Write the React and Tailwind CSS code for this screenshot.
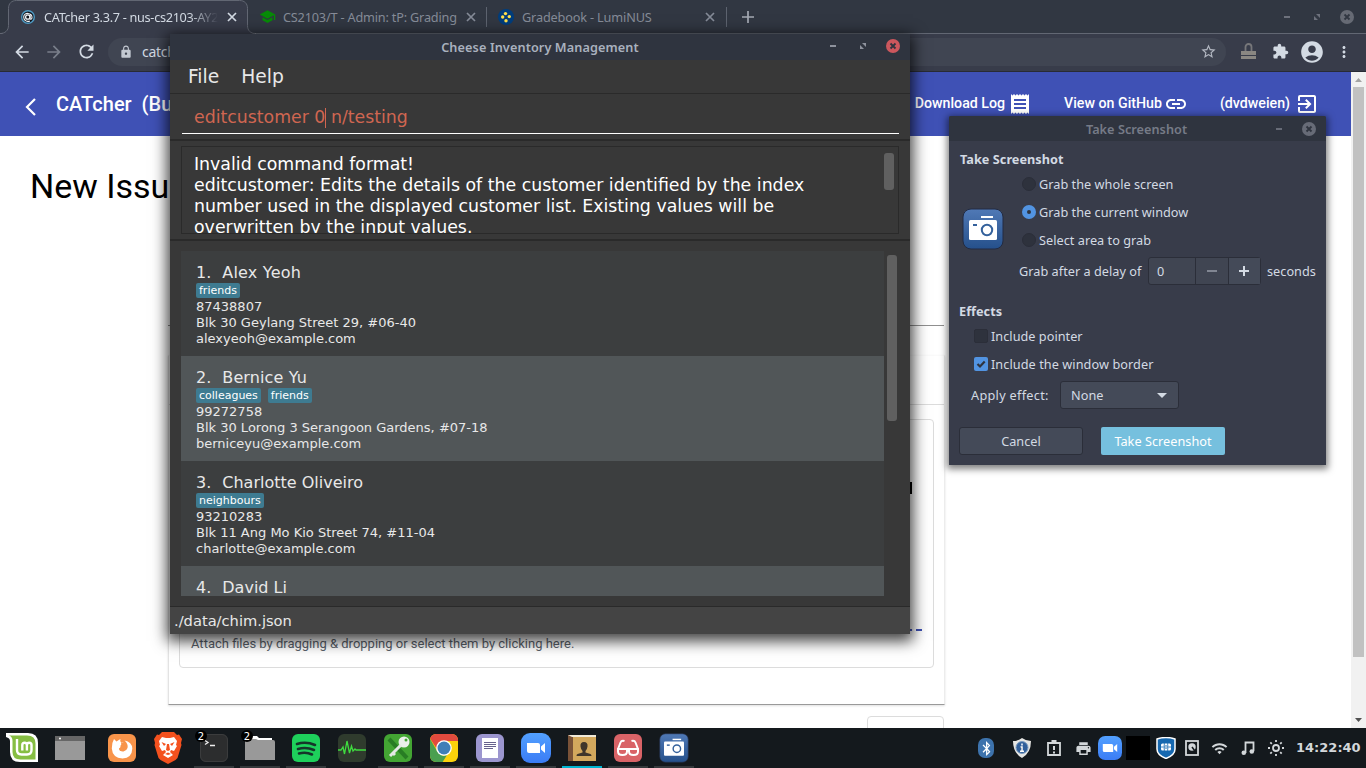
import React from "react";
import {
  MdArrowBack, MdArrowForward, MdRefresh, MdLock, MdStarBorder, MdExtension, MdAccountCircle,
  MdMoreVert, MdReceipt, MdLink, MdExitToApp, MdSchool, MdPrint, MdWifi,
} from "react-icons/md";
import { FaBluetoothB } from "react-icons/fa";

const ui = "font-['Noto_Sans',sans-serif]";

function Cross({ className = "" }) {
  return (
    <svg width="10" height="10" viewBox="0 0 10 10" className={className} stroke="currentColor" strokeWidth="1.7" fill="none">
      <path d="M1 1l8 8M9 1l-8 8" />
    </svg>
  );
}

function CloseButton({ color, mark }) {
  return (
    <svg width="14" height="14" viewBox="0 0 14 14">
      <circle cx="7" cy="7" r="7" fill={color} />
      <path d="M4.500 4.500l5 5M9.500 4.500l-5 5" stroke={mark} strokeWidth="1.800" />
    </svg>
  );
}

function Maximize({ color }) {
  return (
    <svg width="6" height="6" viewBox="0 0 6 6" fill={color}>
      <path d="M2 0h4v4zM0 2v4h4z" />
    </svg>
  );
}

function TabStrip() {
  return (
    <div className={`relative flex h-[33px] shrink-0 items-center bg-[#313742] text-[12.7px] ${ui}`}>
      <svg className="absolute left-0 top-0" width="1366" height="34" viewBox="0 0 1366 34">
        <path d="M0 34v-.5c5 0 8.500-3 8.500-8V8.500c0-5 3-8 8-8H239.500c5 0 8 3 8 8V25.500c0 5 3 8 8 8V34z" fill="#383c4a" />
        <path d="M0 33.500c5 0 8.500-3 8.500-8V8.500c0-5 3-8 8-8H239.500c5 0 8 3 8 8V25.500c0 5 3 8 8 8H1366" fill="none" stroke="#626773" />
      </svg>
      <div className="relative flex h-full w-[248px] items-center pl-[21px] pr-[11px] text-[#d3dae3]">
        <svg width="14" height="14" viewBox="0 0 14 14" className="shrink-0">
          <circle cx="7" cy="7" r="7" fill="#4f9bc4" />
          <circle cx="7" cy="7" r="5.600" fill="#10141c" />
          <circle cx="6.800" cy="7" r="2.200" fill="none" stroke="#f1f4f8" strokeWidth="1.300" />
          <path d="M9 4.700v3.600c0 1.600 2 1 2-.8 0-5-8-5.700-8.300-.5 0 3.800 3.700 5.200 6.200 3.900" fill="none" stroke="#f1f4f8" strokeWidth="1.100" />
        </svg>
        <span className="ml-[9px] w-[176px] translate-y-px overflow-hidden whitespace-nowrap tracking-[-0.3px] [mask-image:linear-gradient(to_right,black_145px,transparent_174px)]">CATcher 3.3.7 - nus-cs2103-AY2</span>
        <Cross className="ml-auto shrink-0" />
      </div>
      <div className="relative flex h-full w-[239px] items-center pl-[11px] pr-[11px] text-[#858b97]">
        <MdSchool size={17} color="#078a07" className="shrink-0" />
        <span className="ml-[7px] translate-y-px whitespace-nowrap tracking-[-0.18px]">CS2103/T - Admin: tP: Grading</span>
        <Cross className="ml-auto shrink-0" />
      </div>
      <div className="relative flex h-full w-[239px] items-center pl-[11px] pr-[11px] text-[#858b97]">
        <span className="-ml-[12px] mr-[-1px] h-5 w-px bg-[#5d636f]" />
        <svg width="16" height="16" viewBox="0 0 16 16" className="ml-[12px] shrink-0">
          <circle cx="8" cy="8" r="8" fill="#003d7c" />
          <g fill="#ffe04a"><circle cx="7.500" cy="4.600" r="1.700" /><circle cx="4.700" cy="8" r="1.700" /><circle cx="11.300" cy="7.600" r="1.700" /><circle cx="8" cy="11.700" r="1.700" /></g>
        </svg>
        <span className="ml-[8px] translate-y-px whitespace-nowrap tracking-[-0.15px]">Gradebook - LumiNUS</span>
        <Cross className="ml-auto" />
      </div>
      <span className="relative h-5 w-px bg-[#5d636f]" />
      <svg className="relative ml-[15px]" width="12" height="12" viewBox="0 0 12 12"><path d="M6 0v12M0 6h12" stroke="#a4a9b3" strokeWidth="1.700" /></svg>
      <div className="relative ml-auto flex items-center pr-[12px]">
        <span className="h-[2px] w-[6px] bg-[#6d717c]" />
        <span className="ml-[24px] mr-[20px]"><Maximize color="#6d717c" /></span>
        <CloseButton color="#666a74" mark="#313742" />
      </div>
    </div>
  );
}

function Toolbar() {
  return (
    <div className={`mt-px flex h-[38px] shrink-0 items-center border-b border-[#282b34] bg-[#383c4a] pb-[2px] text-[#d3dae3] ${ui}`}>
      <MdArrowBack size={20} className="ml-[12px]" />
      <MdArrowForward size={20} className="ml-[12px] text-[#797e8a]" />
      <MdRefresh size={21} className="ml-[12px]" />
      <div className="ml-[11px] flex h-7 w-[1118px] items-center rounded-full bg-[#404552] pl-[11px] pr-[9px]">
        <MdLock size={14} className="text-[#c3c9d2]" />
        <span className="ml-[9px] whitespace-nowrap text-[14px] tracking-[-0.3px]">catch</span>
        <MdStarBorder size={17} className="ml-auto text-[#b3b8c2]" />
      </div>
      <svg className="ml-[15px]" width="15" height="17" viewBox="0 0 15 17"><path d="M4.500 9V4a3 3 0 0 1 6 0v5" fill="none" stroke="#77777a" strokeWidth="1.800" /><path d="M0 8h15v4H0zM0 13h15v3H0z" fill="#8a8782" /></svg>
      <MdExtension size={17} className="ml-[16px]" />
      <MdAccountCircle size={26} className="ml-[10px]" />
      <MdMoreVert size={18} className="ml-[10px]" />
    </div>
  );
}

function PageContent() {
  return (
    <div className="flex min-h-0 flex-1 bg-white font-['Roboto',sans-serif]">
      <div className="flex w-[1351px] flex-col overflow-hidden">
        <header className="flex h-16 shrink-0 items-center bg-[#3f51b5] font-medium text-white">
          <svg className="ml-[24px] mt-[5px]" width="14" height="20" viewBox="0 0 14 20"><path d="M11 2L3 10l8 8" fill="none" stroke="#fff" strokeWidth="2.200" /></svg>
          <span className="ml-[18px] whitespace-pre text-[20px]">CATcher  (Bu</span>
          <div className="ml-auto flex items-center text-[14.200px]">
            <span>Download Log</span>
            <MdReceipt size={24} className="ml-[3px] mr-[32px]" />
            <span>View on GitHub</span>
            <MdLink size={24} className="ml-[2px] mr-[32px]" />
            <span>(dvdweien)</span>
            <MdExitToApp size={24} className="ml-[5px] mr-[32px]" />
          </div>
        </header>
        <h1 className="mt-[27px] h-[46px] pl-[30px] text-[34px] leading-[46px] text-black">New Issue</h1>
        <div className="ml-[168px] mt-[116px] h-px w-[776px] shrink-0 bg-[#8f8f8f]" />
        <section className="ml-[168px] mt-[29px] flex h-[350px] w-[777px] shrink-0 flex-col border border-b-[#9a9a9a] border-l-[#e3e3e3] border-r-[#ececec] border-t-[#fafafa] shadow-[0_1px_2px_rgba(0,0,0,0.12)]">
          <div className="h-[49px] shrink-0 border-b border-[#dcdcdc]" />
          <div className="ml-[10px] mt-[14px] flex h-[249px] w-[755px] flex-col rounded border border-[#dcdcdc]">
            <div className="ml-auto mr-[21px] mt-[62px] h-[12px] w-[10px] border-2 border-black" />
            <div className="mx-[11px] mt-[135px] h-0 border-t-2 border-dashed border-[#3f51b5]" />
            <p className="ml-[11px] mt-[4px] text-[13px] leading-[18px] text-[#586069]">Attach files by dragging &amp; dropping or select them by clicking here.</p>
          </div>
        </section>
        <div className="ml-[867px] mt-[11px] h-[40px] w-[77px] shrink-0 rounded border border-[#dcdcdc]" />
      </div>
      <div className="flex w-[15px] flex-col items-center bg-[#f1f1f1]">
        <svg width="15" height="15" viewBox="0 0 15 15"><path d="M4 10l3.500-4 3.500 4z" fill="#a3a3a3" /></svg>
        <div className="h-[570px] w-[11px] bg-[#c1c1c1]" />
        <svg className="mt-auto" width="15" height="15" viewBox="0 0 15 15"><path d="M4 5l3.500 4L11 5z" fill="#505050" /></svg>
      </div>
    </div>
  );
}

const customers = [
  { name: "Alex Yeoh", spacing: "tracking-[0.2px]", tags: ["friends"], phone: "87438807", address: "Blk 30 Geylang Street 29, #06-40", email: "alexyeoh@example.com" },
  { name: "Bernice Yu", spacing: "tracking-[0.12px]", tags: ["colleagues", "friends"], phone: "99272758", address: "Blk 30 Lorong 3 Serangoon Gardens, #07-18", email: "berniceyu@example.com" },
  { name: "Charlotte Oliveiro", spacing: "tracking-normal", tags: ["neighbours"], phone: "93210283", address: "Blk 11 Ang Mo Kio Street 74, #11-04", email: "charlotte@example.com" },
  { name: "David Li", spacing: "tracking-normal", tags: [], phone: "", address: "", email: "" },
];

function InventoryWindow() {
  return (
    <div className="absolute left-[170px] top-[34px] flex h-[600px] w-[740px] flex-col bg-[#383838] font-['DejaVu_Sans',sans-serif] text-[#e8e8e8] shadow-[0_4px_14px_3px_rgba(0,0,0,0.75)]">
      <div className={`grid h-[26px] shrink-0 grid-cols-[1fr_auto_1fr] items-center bg-[#2f343f] text-[12.700px] font-semibold text-[#a9b1be] ${ui}`}>
        <span />
        <span className="translate-y-px tracking-[0.1px]">Cheese Inventory Management</span>
        <div className="flex -translate-y-px items-center justify-end pr-[10px]">
          <span className="h-[2px] w-[6px] bg-[#8e929d]" />
          <span className="ml-[24px] mr-[20px]"><Maximize color="#8e929d" /></span>
          <CloseButton color="#cc575d" mark="#2f343f" />
        </div>
      </div>
      <div className="flex h-[33px] shrink-0 items-center gap-[21px] pl-[18px] pt-px text-[18.670px]"><span>File</span><span className="translate-x-px">Help</span></div>
      <div className="flex h-[48px] shrink-0 flex-col border-b-2 border-t border-[#2a2a2a] px-[11px]">
        <div className="ml-px flex h-[40px] items-center border-b border-white pl-[12px] pt-[8px] text-[17.330px] text-[#d06651]">
          <span>editcustomer 0</span><span className="-mr-px h-5 w-px bg-[#d06651]" /><span className="whitespace-pre"> n/testing</span>
        </div>
      </div>
      <div className="h-[100px] shrink-0 border-b-2 border-[#2a2a2a] pl-[11px] pt-[5px]">
        <div className="flex h-[88px] w-[718px] overflow-hidden border border-[#2a2a2a] pl-[12px]">
          <div className="mt-[7px] h-[79px] w-[690px] overflow-hidden text-[17.350px] leading-[21px] text-white">
            Invalid command format!<br />editcustomer: Edits the details of the customer identified by the index<br />number used in the displayed customer list. Existing values will be<br />overwritten by the input values.
          </div>
          <div className="mt-[6px] h-[37px] w-[10px] rounded-[3px] bg-[#606060]" />
        </div>
      </div>
      <div className="flex h-[365px] shrink-0 pl-[11px] pt-[10px]">
        <div className="h-[345px] w-[703px] overflow-hidden">
          {customers.map((c, i) => (
            <div key={c.name} className={`h-[105px] pl-[15px] pt-[11px] ${i % 2 ? "bg-[#515658]" : "bg-[#3c3e3f]"}`}>
              <div className="flex h-[21px] gap-[11px] text-[16px] leading-[21px]"><span>{i + 1}.</span><span className={c.spacing}>{c.name}</span></div>
              <div className="flex h-[16px] gap-[7px]">
                {c.tags.map((t) => <span key={t} className="h-[15px] rounded-[2px] bg-[#3e7b91] px-[3px] text-[11px] leading-[15px] text-white">{t}</span>)}
              </div>
              <div className="text-[13px] leading-4"><div>{c.phone}</div><div>{c.address}</div><div>{c.email}</div></div>
            </div>
          ))}
        </div>
        <div className="ml-[3px] mt-[4px] h-[166px] w-[10px] rounded-[3px] bg-[#606060]" />
      </div>
      <div className="flex flex-1 items-center border-t border-[#2a2a2a] bg-[#444444] pl-[4px] text-[14.670px]">./data/chim.json</div>
    </div>
  );
}

function CameraIcon({ size }) {
  return (
    <svg width={size} height={size} viewBox="0 0 42 42">
      <defs><linearGradient id="cam" x2="0" y2="1"><stop stopColor="#5079b6" /><stop offset="1" stopColor="#25508b" /></linearGradient></defs>
      <rect x="1" y="1" width="40" height="40" rx="8" fill="url(#cam)" stroke="#222b42" />
      <path d="M19 8h12v2H19z" fill="#fff" />
      <rect x="7" y="12" width="28" height="20" rx="1.500" fill="#fff" />
      <path d="M11 16h4v2h-4z" fill="#34619c" />
      <circle cx="25" cy="22" r="5.200" fill="none" stroke="#34619c" strokeWidth="2" />
    </svg>
  );
}

function Radio({ label, checked }) {
  return (
    <div className="flex h-7 items-center gap-[3px]">
      <span className={`flex h-[14px] w-[14px] items-center justify-center rounded-full ${checked ? "bg-[#5294e2]" : "border border-[#2b2e39] bg-[#2e323d]"}`}>
        {checked && <span className="h-1 w-1 rounded-full bg-[#2f343f]" />}
      </span>
      <span className="translate-y-px">{label}</span>
    </div>
  );
}

function ScreenshotDialog() {
  return (
    <div className={`absolute left-[949px] top-[116px] flex h-[349px] w-[377px] flex-col rounded-t-[2px] bg-[#383c4a] text-[12.700px] tracking-[0.03px] text-[#d3dae3] shadow-[0_2px_7px_2px_rgba(0,0,0,0.5)] ${ui}`}>
      <div className="grid h-[25px] shrink-0 grid-cols-[1fr_auto_1fr] items-center rounded-t-[2px] bg-[#2f343f] font-semibold text-[#767b87]">
        <span />
        <span className="-translate-x-px translate-y-px">Take Screenshot</span>
        <div className="flex items-center justify-end gap-[20px] pr-[10px]"><span className="h-[2px] w-[6px] bg-[#676b77]" /><CloseButton color="#676b77" mark="#2f343f" /></div>
      </div>
      <div className="px-[10px] pt-[8px]">
        <div className="h-[21px] pl-px font-bold leading-[20px]">Take Screenshot</div>
        <div className="flex">
          <div className="ml-[3px] mt-[38px] w-[42px]"><CameraIcon size={42} /></div>
          <div className="ml-[18px]"><Radio label="Grab the whole screen" /><Radio label="Grab the current window" checked /><Radio label="Select area to grab" /></div>
        </div>
        <div className="ml-[60px] mt-[3px] flex h-7 items-center whitespace-nowrap">
          <span className="w-[129px] translate-y-px">Grab after a delay of</span>
          <div className="flex h-7 w-[113px] rounded-[3px] border border-[#2b2e39] bg-[#404552]">
            <span className="flex w-[47px] items-center border-r border-[#2b2e39] pl-[8px] pt-[2px]">0</span>
            <span className="flex w-[33px] items-center justify-center border-r border-[#2b2e39]"><span className="h-[2px] w-[10px] bg-[#818692]" /></span>
            <span className="flex flex-1 items-center justify-center bg-[#444a58] pr-px"><svg width="10" height="10"><path d="M5 0v10M0 5h10" stroke="#d3dae3" strokeWidth="2" /></svg></span>
          </div>
          <span className="ml-[6px] translate-y-px">seconds</span>
        </div>
        <div className="mt-[16px] h-[20px] font-bold leading-[20px]">Effects</div>
        <div className="ml-[15px] mt-px flex h-7 items-center gap-[3px]"><span className="h-[14px] w-[14px] rounded-[2px] border border-[#2b2e39] bg-[#2e323d]" /><span className="translate-y-px">Include pointer</span></div>
        <div className="ml-[15px] flex h-7 items-center gap-[3px]">
          <svg width="14" height="14"><rect width="14" height="14" rx="2" fill="#5294e2" /><path d="M3.500 7l2.500 2.500 4.700-5" stroke="#2f343f" strokeWidth="2.200" fill="none" /></svg>
          <span className="translate-y-px tracking-[0.07px]">Include the window border</span>
        </div>
        <div className="ml-[12px] mt-[3px] flex h-7 items-center">
          <span className="w-[89px] translate-y-px tracking-[0.3px]">Apply effect:</span>
          <span className="flex h-7 w-[119px] items-center justify-between rounded-[3px] border border-[#2b2e39] bg-[#444a58] pl-[10px] pr-[11px]"><span className="translate-y-px">None</span><svg width="10" height="5"><path d="M0 0h10L5 5z" fill="#d3dae3" /></svg></span>
        </div>
        <div className="mt-[18px] flex gap-[18px]">
          <span className="flex h-7 w-[124px] items-center justify-center rounded-[3px] border border-[#2b2e39] bg-[#444a58] pt-[2px]">Cancel</span>
          <span className="flex h-7 w-[124px] items-center justify-center rounded-[2px] bg-[#76c0de] pt-[2px] text-white">Take Screenshot</span>
        </div>
      </div>
    </div>
  );
}

function Tile({ fill, children }) {
  return (
    <svg width="30" height="30" viewBox="0 0 30 30">
      <rect x="1" y="1" width="28" height="28" rx="6" fill={fill} />
      {children}
    </svg>
  );
}

const Folder = ({ window: asWindow }) => (
  <svg width="30" height="30" viewBox="0 0 30 30">
    {asWindow
      ? <><path d="M0 3h30v24H0z" fill="#999" /><path d="M0 3h30v5H0z" fill="#666" /><circle cx="5" cy="5.500" r="1" fill="#fff" /></>
      : <><path d="M9 3h3l2 2h13v4H4V3z" fill="#fff" /><path d="M0 6h11l2 1h15q2 0 2 2v18H0z" fill="#999" /></>}
  </svg>
);

const Zoom = ({ size }) => (
  <svg width={size} height={size} viewBox="0 0 30 30">
    <defs><linearGradient id="zm" x2="0" y2="1"><stop stopColor="#52a0ff" /><stop offset="1" stopColor="#3b7cf5" /></linearGradient></defs>
    <rect width="30" height="30" rx="9" fill="url(#zm)" />
    <path d="M6 10h11q2 0 2 2v8H8q-2 0-2-2zM20 13.500l4-3.500v10l-4-3.500z" fill="#fff" />
  </svg>
);

const apps = [
  { w: "mint", icon: (
    <svg width="32" height="30" viewBox="0 0 32 30">
      <path d="M0 0h22q10 0 10 10v19H14Q4 29 4 19V8q0-3-4-4z" fill="#fff" />
      <path d="M3 2.500h18q8.500 0 8.500 8v16H14.500Q6.500 26.500 6.500 19V8Q6.500 3.500 3 2.500z" fill="#86be43" />
      <path d="M11 6v11q0 4.500 4.500 4.500h5.500q4.500 0 4.500-4.500v-5q0-2.300-2.300-2.300t-2.300 2.300v5.500M20.900 12q0-2.300-2.300-2.300t-2.300 2.300v5.500" fill="none" stroke="#fff" strokeWidth="2.400" />
    </svg>) },
  { w: "desktop", icon: <Folder window /> },
  { w: "firefox", icon: (
    <Tile fill="#f8944a">
      <path d="M7 6l2.500 2.500Q12 6.500 13.500 6q-.8 2 .5 3.500h2.500l-3 3q.5 2-1.500 3 1 3.500 4.500 3 3-.5 4-3.500 1-4-3-7.500Q25 9 25.300 15.500 25 25 15.500 25.500 5.500 25 4.800 15.500 4.800 9.500 7 6z" fill="#fff" />
      <path d="M14 9.500l4 .3-3.500 2.700zM12 15.500q2.500 1.800 5-.3-1 3.500-4 2.800z" fill="#f8944a" />
    </Tile>) },
  { w: "brave", icon: (
    <svg width="28" height="32" viewBox="0 0 28 32">
      <path d="M8 0h12l3 3 2-.5L28 7l-1 4 .5 2-4 13-2 2L14 32l-7.500-4-2-2-4-13L1 11 0 7l3-4.500L5 3z" fill="#f4511e" />
      <path d="M5 9l3-4 4 1h4l4-1 3 4-1 4 1 1-3 5-3-1-1 2 3 3-5 3-5-3 3-3-1-2-3 1-3-5 1-1z" fill="#fff" />
      <path d="M7.500 10l4.500 2-2 2zM20.500 10L16 12l2 2zM13 12h2l1 6-2 1-2-1zM11 22l3-1.500 3 1.500-3 1z" fill="#f4511e" />
    </svg>) },
  { w: "terminal", badge: true, run: true, icon: <Tile fill="#2c2d2e"><rect x="1.500" y="1.500" width="27" height="27" rx="5.500" fill="none" stroke="#3b3c3d" /><path d="M6 7.500l3 2-3 2M11 12.500h5" fill="none" stroke="#eee" strokeWidth="1.300" /></Tile> },
  { w: "files", badge: true, run: true, icon: <Folder /> },
  { w: "spotify", run: true, icon: <Tile fill="#1ed05b"><path d="M6 11q9-3 18 1M7 16q8-2.500 16 1M8 20.500q7-2 13 1" fill="none" stroke="#16352a" strokeWidth="2.600" strokeLinecap="round" /></Tile> },
  { w: "monitor", icon: <Tile fill="#2f3b2d"><path d="M1 17h3l2-3 1.500 7L10 8l2.500 12 2-7 1.500 5 2-2 1 1h10" fill="none" stroke="#3fdc3f" strokeWidth="1.300" /></Tile> },
  { w: "keepass", run: true, icon: <Tile fill="#43a533"><path d="M6 6l18 19" stroke="#287d24" strokeWidth="4" /><circle cx="21" cy="9" r="5.500" fill="#eaf0ea" /><circle cx="23" cy="7" r="1.500" fill="#43a533" /><path d="M18 12L7 23M10 20l2 2" stroke="#e5e9e5" strokeWidth="3" /></Tile> },
  { w: "chrome", run: true, icon: (
    <svg width="30" height="30" viewBox="0 0 30 30">
      <defs><clipPath id="ch"><rect x="1" y="1" width="28" height="28" rx="6" /></clipPath></defs>
      <g clipPath="url(#ch)"><path d="M0 0h30v30H0z" fill="#fcd20b" /><path d="M0 0h30v8H15l-7 8L0 4z" fill="#e14a3e" /><path d="M0 4l8 14 6 5 4-1-5 8H0z" fill="#4a9f4f" /></g>
      <circle cx="15" cy="15" r="7.800" fill="#fff" /><circle cx="15" cy="15" r="6.500" fill="#3f7fb8" />
    </svg>) },
  { w: "editor", run: true, icon: <Tile fill="#9c96cf"><path d="M7 5h16v20H7z" fill="#fff" /><path d="M9 9.500h12M9 11.500h12M9 13.500h12M9 15.500h9" stroke="#565080" strokeWidth=".9" /></Tile> },
  { w: "zoom", run: true, icon: <Zoom size={30} /> },
  { w: "contacts", run: true, active: true, icon: (
    <svg width="30" height="30" viewBox="0 0 30 30"><path d="M1 2h28v26H1z" fill="#d3a85d" /><path d="M1 2h5v26H1z" fill="#795238" /><path d="M1 2h28v2H5z" fill="#f1ead9" /><path d="M17 9q4 0 3.500 4.500Q20 17 18.500 18v1.500l5 1.500q1 .5 1 2h-15q0-1.500 1-2l5-1.500V18Q14 17 13.500 13.500 13 9 17 9z" fill="#40362b" /></svg>) },
  { w: "reader", run: true, icon: (
    <Tile fill="#d96367">
      <g fill="none" stroke="#fff" strokeWidth="2"><path d="M5 16h9v2.500q0 3.500-4.500 3.500T5 18.500zM16 16h9v2.500q0 3.500-4.500 3.500T16 18.500zM14 17h2M5 16l2.500-6.500q1-2.500 4-1.500M25 16l-2.500-6.500q-1-2.500-4-1.500" /></g>
    </Tile>) },
  { w: "camera", run: true, icon: <CameraIcon size={30} /> },
];

function Taskbar() {
  return (
    <div className="flex h-10 shrink-0 bg-[#14191d]">
      {apps.map((a, i) => (
        <div key={a.w} className={`relative flex h-10 w-[46px] flex-col items-center pt-[5px] ${i === 0 ? "pr-[2px]" : i === 1 ? "ml-px" : i === 2 ? "ml-[6px]" : ""}`}>
          <div className="flex h-[30px] items-center">{a.icon}</div>
          {a.badge && <span className="absolute left-[4px] top-[2px] flex h-[12px] w-[12px] items-center justify-center rounded-full bg-black font-['DejaVu_Sans',sans-serif] text-[10px] text-white">2</span>}
          {a.run && <span className={`mt-auto h-[2px] w-10 ${a.active ? "bg-[#00b5d1]" : "bg-[#35393c]"}`} />}
        </div>
      ))}
      <div className="ml-auto flex items-center text-[#d3d7da]">
        <span className="flex h-5 w-4 items-center justify-center rounded-[7px] bg-[#3d73ad]"><FaBluetoothB size={15} color="#fff" /></span>
        <svg className="ml-[18px]" width="20" height="20" viewBox="0 0 20 20"><path d="M10 0q4 3 9 3 0 12-9 17Q1 15 1 3q5 0 9-3z" fill="#e5e5e3" /><circle cx="10" cy="9.500" r="6" fill="#315f9a" stroke="#7b9cc1" /><path d="M10 5.500v2M8.500 9H10v4M8 13.300h4" stroke="#fff" strokeWidth="1.500" /></svg>
        <svg className="ml-[15px]" width="14" height="16" viewBox="0 0 14 16"><path d="M1 3h12v12H1z" fill="none" stroke="currentColor" strokeWidth="1.800" /><path d="M4.500 0h5v4h-5z" fill="currentColor" /><path d="M7 6v4M7 11.500v2" stroke="currentColor" strokeWidth="2" /></svg>
        <MdPrint size={17} className="ml-[14px]" />
        <span className="ml-[6px]"><Zoom size={24} /></span>
        <span className="ml-[4px] h-6 w-6 bg-black" />
        <svg className="ml-[6px]" width="20" height="22" viewBox="0 0 20 22"><path d="M1 2q9-3 18 0v10q0 6-9 9.500Q1 18 1 12z" fill="#1668b0" stroke="#fff" strokeWidth="1.500" /><rect x="5" y="6.500" width="10" height="7" rx="1.500" fill="#fff" /><path d="M8.300 6v2.300M11.700 6v2.300M8.300 11.700V14M11.700 11.700V14M5 10h2M13 10h2" stroke="#1668b0" strokeWidth=".8" /><path d="M7.500 8.500h5v3h-5z" fill="#1668b0" /><path d="M8.500 10h3" stroke="#fff" strokeWidth="1.200" /></svg>
        <svg className="ml-[9px]" width="14" height="16" viewBox="0 0 14 16"><rect x="1" y="1" width="12" height="14" fill="none" stroke="currentColor" strokeWidth="1.800" /><circle cx="7" cy="7" r="3.700" fill="currentColor" /><path d="M7 7l4 5.500" stroke="#14191d" strokeWidth="1.500" /></svg>
        <MdWifi size={17} className="ml-[12px]" />
        <svg className="ml-[13px]" width="14" height="14" viewBox="0 0 14 14"><path d="M4.500 12V1.500h8V10" fill="none" stroke="currentColor" strokeWidth="1.800" /><circle cx="2.800" cy="11.700" r="2.300" fill="currentColor" /><circle cx="10.800" cy="10.500" r="2.300" fill="currentColor" /></svg>
        <svg className="ml-[13px]" width="16" height="16" viewBox="0 0 16 16"><circle cx="8" cy="8" r="3" fill="none" stroke="currentColor" strokeWidth="1.800" /><path d="M8 0v2M8 14v2M0 8h2M14 8h2M2.300 2.300l1.500 1.500M12.200 12.200l1.500 1.500M13.700 2.300l-1.500 1.500M3.800 12.200l-1.500 1.500" stroke="currentColor" strokeWidth="1.800" /></svg>
        <span className="ml-[12px] w-[70px] font-['DejaVu_Sans',sans-serif] text-[13px] font-bold">14:22:40</span>
      </div>
    </div>
  );
}

export default function App() {
  return (
    <div className="relative flex h-[768px] w-[1366px] flex-col overflow-hidden">
      <TabStrip />
      <Toolbar />
      <PageContent />
      <Taskbar />
      <InventoryWindow />
      <ScreenshotDialog />
    </div>
  );
}
